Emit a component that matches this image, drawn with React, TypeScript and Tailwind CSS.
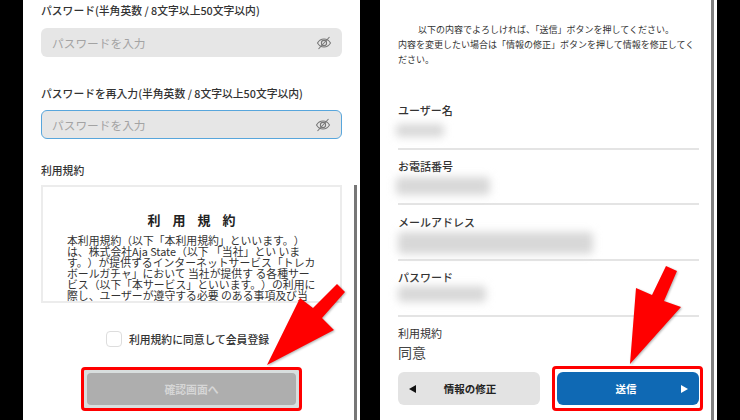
const font = { fontFamily: '"Noto Sans CJK JP", "Noto Sans", sans-serif' };

const termsLines = [
  '本利用規約（以下「本利用規約」といいます。）',
  'は、株式会社Aja State（以下 「当社」とい いま',
  'す。）が提供するインターネットサービス「トレカ',
  'ボールガチャ」において 当社が提供す る各種サー',
  'ビス（以下「本サービス」といいます。）の利用に',
  '際し、ユーザーが遵守する必要 のある事項及び当',
  '社とユーザーとの間の権利義務関係を定めるもの',
];

function EyeOff() {
  return (
    <svg width="16" height="16" viewBox="0 0 16 16" fill="none" stroke="#777" strokeWidth="1.1" className="shrink-0">
      <path d="M1.5 8C3 5.4 5.3 4 8 4s5 1.4 6.500 4c-1.500 2.600-3.800 4-6.500 4S3 10.600 1.500 8Z" />
      <circle cx="8" cy="8" r="2.600" />
      <path d="M2.500 14 13.500 2" />
    </svg>
  );
}

function PasswordInput({ focused }: { focused?: boolean }) {
  return (
    <div
      className={`flex h-[29px] items-center justify-between rounded-md bg-[#e6e6e6] pr-[10px] ${
        focused ? 'border-[1.5px] border-[#58a6dc] pl-[10px]' : 'pl-[11px]'
      }`}
    >
      <span className="text-[11.700px] leading-none text-[#a3a3a3]">パスワードを入力</span>
      <EyeOff />
    </div>
  );
}

function ConfirmRow({ label, blurClass, rowClass }: { label: string; blurClass: string; rowClass: string }) {
  return (
    <div className={`border-b-2 border-[#e4e4e4] ${rowClass}`}>
      <div className="text-[11px] font-medium leading-[16px] text-[#333]">{label}</div>
      <div className={`rounded-sm bg-[#d8d8d8] blur-[4px] ${blurClass}`} />
    </div>
  );
}

function Triangle({ dir, color }: { dir: 'left' | 'right'; color: string }) {
  return (
    <svg width="7" height="8" viewBox="0 0 7 8" className="shrink-0">
      <polygon points={dir === 'left' ? '7,0 7,8 0,4' : '0,0 0,8 7,4'} fill={color} />
    </svg>
  );
}

export default function App() {
  return (
    <div style={font} className="flex h-[420px] w-[740px] gap-[20px] overflow-hidden bg-black pl-[23px]">
      {/* left phone */}
      <div className="relative h-[420px] w-[337px] bg-white pl-[18px] pr-[18px] text-[#333]">
        <div className="pt-[2px] text-[10.800px] font-medium leading-[16px]">パスワード(半角英数 / 8文字以上50文字以内)</div>
        <div className="mt-[10px]">
          <PasswordInput />
        </div>
        <div className="mt-[28px] text-[10.800px] font-medium leading-[16px]">パスワードを再入力(半角英数 / 8文字以上50文字以内)</div>
        <div className="mt-[9px]">
          <PasswordInput focused />
        </div>
        <div className="mt-[23px] text-[10.800px] font-medium leading-[16px]">利用規約</div>
        <div className="mt-[7px] h-[118px] overflow-hidden border-2 border-[#ececec] px-[24px] pt-[24px]">
          <div className="pl-[12px] text-center text-[13px] font-bold leading-[18px] tracking-[12px] text-[#222]">利用規約</div>
          <div className="mt-[6px] text-[10.850px] leading-[11px] text-[#333] [text-spacing-trim:space-all]">
            {termsLines.map((line) => (
              <div key={line} className="whitespace-nowrap">
                {line}
              </div>
            ))}
          </div>
        </div>
        <div className="mt-[28px] flex items-center justify-center gap-[7px] pr-[8px]">
          <div className="h-[16px] w-[16px] rounded-sm border border-[#ddd] bg-white" />
          <span className="text-[10.800px] font-medium leading-[16px]">利用規約に同意して会員登録</span>
        </div>
        <div className="ml-[40px] mt-[20px] h-[44px] w-[221px] rounded border-[3px] border-[#ff0000] bg-[#d8dede] p-[3px]">
          <div className="flex h-full items-center justify-center rounded bg-[#aeaeae] text-[10.800px] font-bold text-[#d6d6d6]">
            確認画面へ
          </div>
        </div>
        <div className="absolute right-[3px] top-[185px] h-[235px] w-[3px] bg-[#777]" />
        <svg className="absolute left-[235px] top-[275px] drop-shadow-[1px_1px_1px_rgba(0,0,0,0.3)]" width="120" height="100" viewBox="258 275 120 100">
          <polygon points="267,365 300,298 313,308 337,284 345,292 322,318 334,330" fill="#ff0000" />
        </svg>
      </div>

      {/* right phone */}
      <div className="relative h-[420px] w-[337px] bg-white pl-[18px] pr-[18px] text-[#333]">
        <p className="pt-[22px] text-[9px] leading-[15px] text-[#333]">
          <span className="block pl-[20px]">以下の内容でよろしければ、「送信」ボタンを押してください。</span>
          内容を変更したい場合は「情報の修正」ボタンを押して情報を修正してください。
        </p>
        <div className="mt-[35px]">
          <ConfirmRow label="ユーザー名" rowClass="h-[48px]" blurClass="mt-[6px] -ml-[2px] h-[13px] w-[48px]" />
          <ConfirmRow label="お電話番号" rowClass="mt-[8px] h-[47px]" blurClass="mt-[3px] -ml-[2px] h-[18px] w-[94px]" />
          <ConfirmRow label="メールアドレス" rowClass="mt-[9px] h-[47px]" blurClass="mt-[2px] h-[22px] w-[195px]" />
          <ConfirmRow label="パスワード" rowClass="mt-[8px] h-[48px]" blurClass="mt-[1px] h-[16px] w-[88px]" />
        </div>
        <div className="mt-[8px] text-[11px] leading-[16px] text-[#333]">利用規約</div>
        <div className="mt-[1px] text-[14px] leading-[20px] text-[#444]">同意</div>
        <div className="mt-[10px] flex w-[301px] justify-between">
          <div className="flex h-[33px] w-[142px] items-center rounded-md bg-[#e3e3e3] pl-[11px] pr-[11px]">
            <Triangle dir="left" color="#111" />
            <span className="flex-1 pr-[5px] text-center text-[10.500px] font-bold text-[#222]">情報の修正</span>
          </div>
          <div className="flex h-[33px] w-[142px] items-center rounded-md bg-[#0f69b4] pl-[14px] pr-[11px]">
            <span className="flex-1 text-center text-[10.500px] font-bold text-white">送信</span>
            <Triangle dir="right" color="#fff" />
          </div>
        </div>
        <div className="absolute left-[172px] top-[366px] h-[45px] w-[151px] rounded border-[3px] border-[#ff0000]" />
        <div className="absolute bottom-0 right-[3px] top-0 w-[3px] bg-[#808080]" />
        <svg className="absolute left-[240px] top-[260px] drop-shadow-[1px_1px_1px_rgba(0,0,0,0.3)]" width="70" height="110" viewBox="620 260 70 110">
          <polygon points="630,364 636,288 652,295 666,266 677,271 664,301 681,307" fill="#ff0000" />
        </svg>
      </div>
    </div>
  );
}
